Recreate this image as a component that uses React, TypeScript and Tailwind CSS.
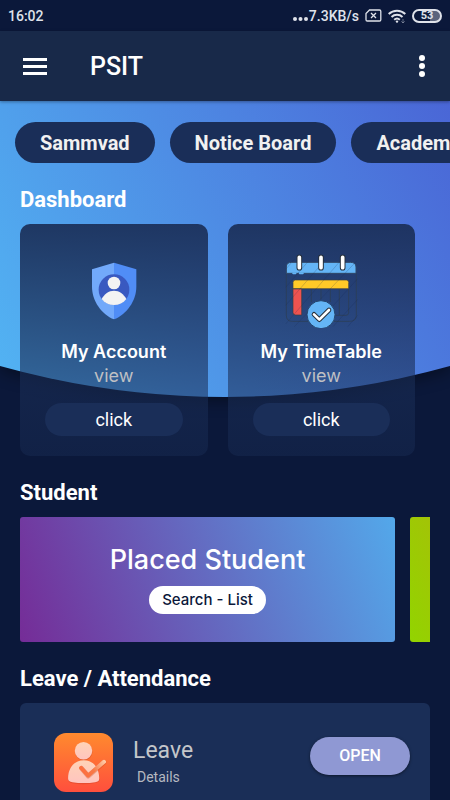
import React from "react";

const chips = ["Sammvad", "Notice Board", "Academics"];

function StatusBar() {
  return (
    <div className="flex h-[31px] shrink-0 items-center justify-between bg-[#0b183a] px-2 text-sm font-medium text-[#dfe2ea]">
      <span>16:02</span>
      <div className="flex items-center gap-1.5">
        <div className="flex items-center">
          <svg width="17" height="14" viewBox="0 0 17 14" fill="currentColor" aria-hidden="true">
            <circle cx="3" cy="10" r="2" />
            <circle cx="8.500" cy="10" r="2" />
            <circle cx="14" cy="10" r="2" />
          </svg>
          <span>7.3KB/s</span>
        </div>
        <svg width="17" height="13" viewBox="0 0 17 13" fill="none" stroke="currentColor" strokeWidth="1.300" aria-hidden="true">
          <path d="M4.500 1H14.500a1.300 1.300 0 0 1 1.300 1.300V10.700a1.300 1.300 0 0 1-1.300 1.300H2.300A1.300 1.300 0 0 1 1 10.700V4.500Z" />
          <path d="M6 4l5 5M11 4l-5 5" />
        </svg>
        <svg width="18" height="14" viewBox="0 0 18 14" fill="none" stroke="currentColor" strokeWidth="2" aria-hidden="true">
          <path d="M.7 5a12 12 0 0 1 16.600 0M3.500 8a8 8 0 0 1 11 0M6.200 10.800a4.200 4.200 0 0 1 5.600 0" />
          <circle cx="9" cy="12.600" r="1.200" fill="currentColor" stroke="none" />
          <path d="M15 10v4M13.300 12.300l1.700 1.700 1.700-1.700" strokeWidth=".8" opacity=".5" />
        </svg>
        <span className="flex h-[14px] w-[30px] items-center justify-center rounded-full border-2 border-[#dfe2ea] bg-linear-to-r from-[#0b183a] from-60% to-[#5b647c] to-60% text-[11px] font-bold">
          53
        </span>
      </div>
    </div>
  );
}

function Header() {
  return (
    <header className="relative z-10 flex h-[70px] shrink-0 items-center bg-[#182949] pr-[18px] pl-[23px] shadow-[0_1px_3px_rgba(0,0,0,0.35)]">
      <button type="button" aria-label="Open menu" className="flex w-6 flex-col gap-1">
        <span className="h-[3px] w-full bg-white" />
        <span className="h-[3px] w-full bg-white" />
        <span className="h-[3px] w-full bg-white" />
      </button>
      <h1 className="ml-[43px] flex-1 pt-[2px] text-[25px] leading-8 font-medium text-white">PSIT</h1>
      <button type="button" aria-label="More options" className="flex w-5 flex-col items-center gap-[2px]">
        <span className="size-[6px] rounded-full bg-white" />
        <span className="size-[6px] rounded-full bg-white" />
        <span className="size-[6px] rounded-full bg-white" />
      </button>
    </header>
  );
}

function ShieldIcon() {
  return (
    <svg width="74" height="74" viewBox="230 102 222 222" aria-hidden="true">
      <path d="M341 128L275 148V200C275 243 304 283 341 298Z" fill="#72a9fa" />
      <path d="M341 128L408 148V200C408 243 378 283 341 298Z" fill="#508df6" />
      <circle cx="341" cy="209" r="46" fill="#3959c0" />
      <circle cx="341" cy="189" r="19" fill="#f3f3f3" />
      <path d="M304 237C312 222 325 212 341 212S370 222 378 237C369 249 356 255 341 255S313 249 304 237Z" fill="#f3f3f3" />
    </svg>
  );
}

function CalendarIcon() {
  return (
    <svg width="74" height="74" viewBox="13 16 222 222" fill="none" aria-hidden="true">
      <g stroke="#2d3f58" strokeWidth="2.500">
        <path d="M20 74V200Q20 218 38 218H210Q230 218 230 200V74" />
        <path d="M95 122V160M124 122V152M152 122V160M179 122V199M207 120V192Q207 200 199 200H168" />
      </g>
      <path d="M20 74V55Q20 41 36 41H212Q229 41 229 55V74Z" fill="#64b5f6" stroke="#2f4666" strokeWidth="3" />
      <path d="M40 120V101Q40 94 47 94H200Q207 94 207 101V120Z" fill="#ffca28" stroke="#3b4044" strokeWidth="2" />
      <path d="M40 121H66V199H48Q40 199 40 191Z" fill="#ef5350" stroke="#3b4044" strokeWidth="2" />
      <path d="M40 74H48M60 74H70" stroke="#64b5f6" strokeWidth="5" strokeLinecap="round" />
      <g stroke="#17294e" strokeWidth="2" opacity=".3">
        <path d="M18 62L44 32M18 116L84 40M18 170L136 34M18 226L186 32M44 234L232 36M104 234L234 90M160 234L234 152M204 234L234 200" />
      </g>
      <g strokeLinecap="round">
        <path d="M59 26V57M124 26V57M189 26V57" stroke="#26303c" strokeWidth="17" />
        <path d="M59 26V57M124 26V57M189 26V57" stroke="#fff" strokeWidth="11" />
      </g>
      <circle cx="124" cy="198" r="42" fill="#64b5f6" stroke="#25466e" strokeWidth="3" />
      <g strokeLinecap="round" strokeLinejoin="round">
        <path d="M103 197L119 213L148 184" stroke="#26303c" strokeWidth="14" />
        <path d="M103 197L119 213L148 184" stroke="#fff" strokeWidth="8" />
      </g>
    </svg>
  );
}

function LeaveIcon() {
  return (
    <svg width="59" height="59" viewBox="27 24 176 176" className="shrink-0" aria-hidden="true">
      <defs>
        <linearGradient id="leaveBg" x1="0" y1="0" x2="0" y2="1">
          <stop offset="0" stopColor="#ff8a2e" />
          <stop offset="1" stopColor="#ff4f3d" />
        </linearGradient>
        <linearGradient id="leavePerson" x1="0" y1="0" x2="0" y2="1">
          <stop offset="0" stopColor="#ffd3b6" />
          <stop offset="1" stopColor="#ffc4bf" />
        </linearGradient>
        <linearGradient id="leaveCheck" gradientUnits="userSpaceOnUse" x1="105" y1="155" x2="182" y2="108">
          <stop offset="0" stopColor="#ff6a3a" />
          <stop offset=".5" stopColor="#f77a48" />
          <stop offset="1" stopColor="#ffd0ae" />
        </linearGradient>
      </defs>
      <rect x="27" y="24" width="176" height="176" rx="36" fill="url(#leaveBg)" />
      <g opacity=".25" fill="#a52a10">
        <circle cx="116" cy="80" r="26" />
        <path d="M69 162C69 128 88 106 116 106S163 128 163 162C163 170 157 172 150 173Q116 180 82 174Q69 172 69 162Z" />
      </g>
      <circle cx="115" cy="77" r="26" fill="url(#leavePerson)" />
      <path d="M69 160C69 127 88 105 116 105S162 127 162 160C162 168 157 170 150 171Q116 176 82 171Q69 170 69 160Z" fill="url(#leavePerson)" />
      <path d="M109 129L129 153L176 112" fill="none" stroke="#b8401c" strokeOpacity=".3" strokeWidth="14" strokeLinecap="round" strokeLinejoin="round" />
      <path d="M108 128L129 151L176 110" fill="none" stroke="url(#leaveCheck)" strokeWidth="12" strokeLinecap="round" strokeLinejoin="round" />
    </svg>
  );
}

function SectionTitle({ children }: { children: React.ReactNode }) {
  return <h2 className="mt-[23px] mb-[10px] px-5 text-[22px] leading-7 font-bold text-white">{children}</h2>;
}

function DashboardCard({ icon, title }: { icon: React.ReactNode; title: string }) {
  return (
    <article className="flex flex-1 flex-col items-center rounded-[10px] bg-linear-to-b from-[#1a2e57]/92 to-[#1a2e57]/42 px-[25px] pt-[30px] pb-5">
      {icon}
      <h3 className="mt-3 font-['Inter',sans-serif] text-lg leading-6 font-semibold whitespace-nowrap text-white">{title}</h3>
      <p className="font-['Inter',sans-serif] text-lg leading-6 text-[#bfc0c4]">view</p>
      <button type="button" className="mt-[15px] h-[33px] w-full rounded-full bg-[#1a2e58] text-lg leading-6 text-white">
        click
      </button>
    </article>
  );
}

export default function App() {
  return (
    <div className="flex h-screen flex-col overflow-hidden bg-[#0b183a] font-['Roboto',sans-serif]">
      <StatusBar />
      <Header />
      <main className="relative isolate flex-1 overflow-hidden">
        <div className="absolute inset-x-0 top-0 -z-10 drop-shadow-[0_4px_8px_rgba(0,0,0,0.4)]">
          <div className="h-[296px] bg-linear-[62deg] from-[#52b4f3] to-[#4a66d6] [clip-path:ellipse(200%_975px_at_50%_-679px)]" />
        </div>

        <nav aria-label="Shortcuts" className="flex gap-[15px] overflow-x-auto pt-[21px] pl-[15px] [scrollbar-width:none]">
          {chips.map((chip) => (
            <a key={chip} href="#" className="flex h-[41px] shrink-0 items-center rounded-full bg-[#1a2e58] px-[25px] pt-px text-xl font-bold text-[#f1f1f1]">
              {chip}
            </a>
          ))}
        </nav>

        <SectionTitle>Dashboard</SectionTitle>
        <div className="flex gap-5 pr-[35px] pl-5">
          <DashboardCard icon={<ShieldIcon />} title="My Account" />
          <DashboardCard icon={<CalendarIcon />} title="My TimeTable" />
        </div>

        <SectionTitle>Student</SectionTitle>
        <div className="mx-5 flex gap-[15px] overflow-hidden">
          <article className="flex h-[125px] w-[calc(100%-35px)] shrink-0 flex-col items-center rounded-[3px] bg-linear-[70deg] from-[#752c97] to-[#53a8ea] pt-[27px] font-['Inter',sans-serif]">
            <h3 className="text-[27px] leading-8 font-medium text-white">Placed Student</h3>
            <button type="button" className="mt-[10px] h-7 rounded-full bg-white px-[13px] text-[15px] leading-5 font-medium text-[#0b183a]">
              Search - List
            </button>
          </article>
          <div className="h-[125px] w-[calc(100%-35px)] shrink-0 rounded-[3px] bg-linear-[70deg] from-[#92d400] to-[#ff6a2a]" />
        </div>

        <SectionTitle>Leave / Attendance</SectionTitle>
        <article className="mx-5 flex items-start rounded-[6px] bg-[#1a2e57] pt-[30px] pr-5 pb-[30px] pl-[34px]">
          <LeaveIcon />
          <div className="mt-1 ml-5 flex-1">
            <h3 className="text-[23px] leading-7 text-[#c4c6ca]">Leave</h3>
            <p className="pl-1 text-sm leading-6 text-[#b5b8c0]">Details</p>
          </div>
          <button type="button" className="mt-1 h-[38px] w-[100px] rounded-full bg-[#8f98d3] text-base font-medium text-white shadow-[0_1px_3px_rgba(0,0,0,0.5)]">
            OPEN
          </button>
        </article>
      </main>
    </div>
  );
}
